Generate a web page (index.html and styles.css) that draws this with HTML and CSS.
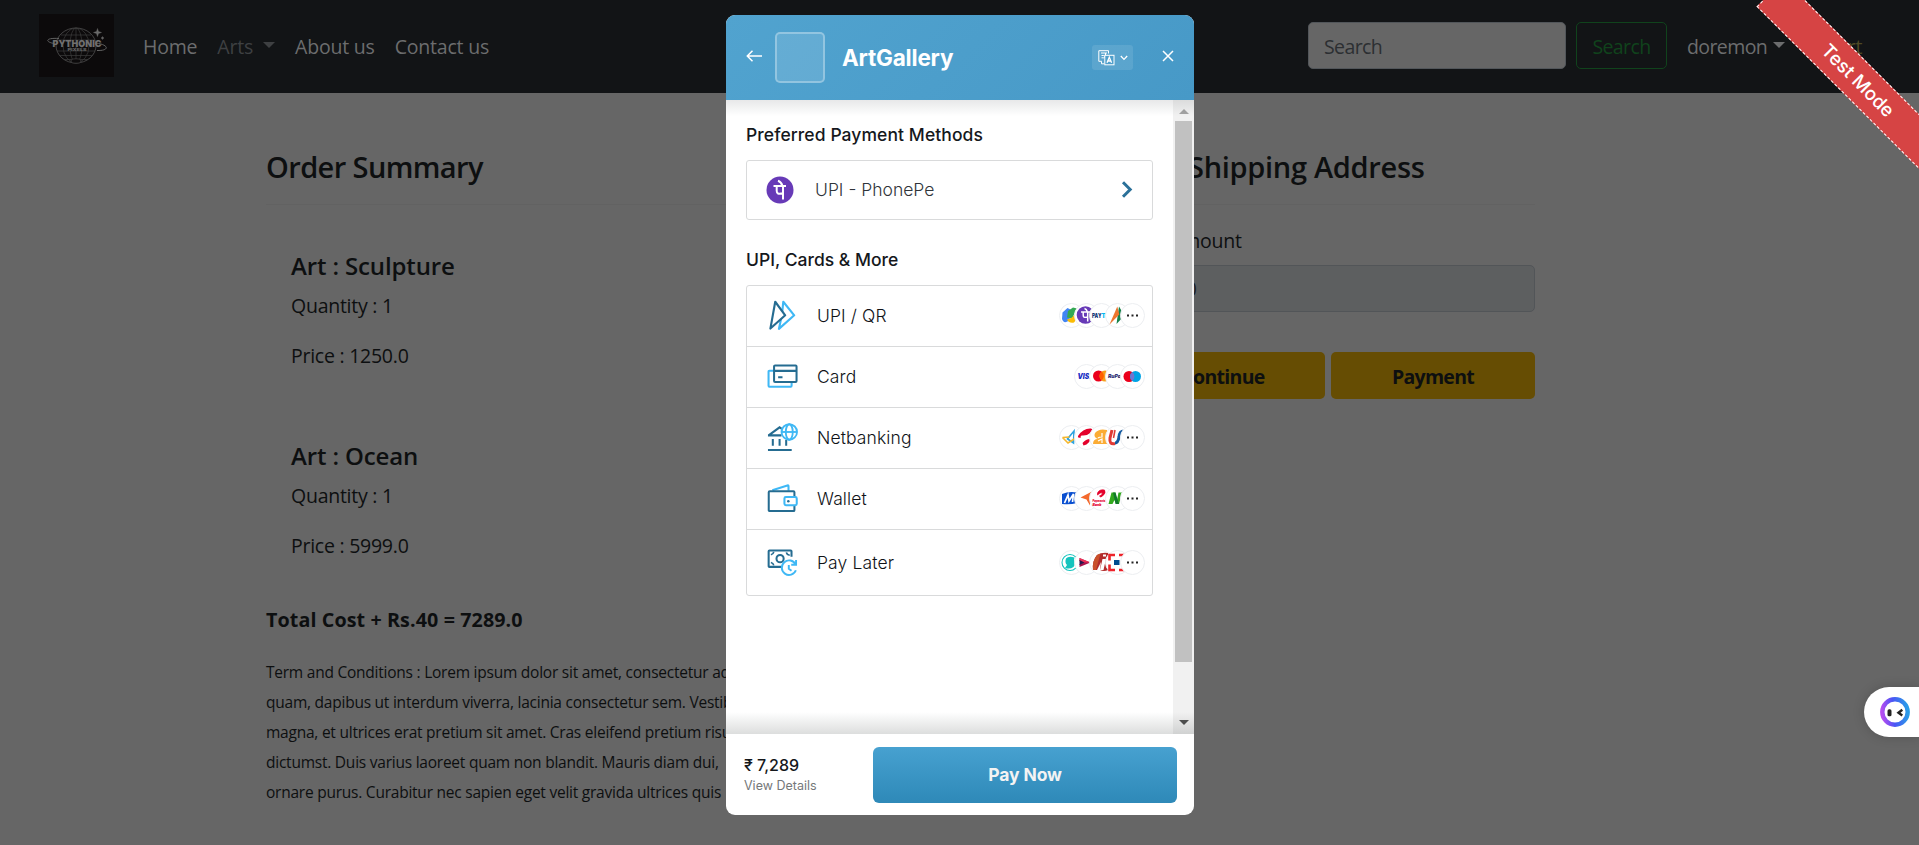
FILE: index.html
```html
<!DOCTYPE html>
<html lang="en">
<head>
<meta charset="utf-8">
<title>ArtGallery - Payment</title>
<link rel="stylesheet" href="styles.css">
</head>
<body>
<div class="page">
  <header class="navbar">
    <svg class="brand" viewBox="0 0 75 63">
      <rect width="75" height="63" fill="#0c0a0b"/>
      <g fill="none" stroke="#3c3c3c" stroke-width=".7">
        <ellipse cx="37" cy="31.500" rx="20" ry="17.500" stroke="#5a5a5a"/>
        <ellipse cx="37" cy="31.500" rx="6" ry="17.500"/>
        <ellipse cx="37" cy="31.500" rx="13" ry="17.500"/>
        <path d="M37 14v35M22 21h30M18.500 26h37M18 37h38M20 41.500h34M25 45.500h24"/>
      </g>
      <ellipse cx="37" cy="47" rx="5" ry="2.200" fill="#0c0a0b" stroke="#494949" stroke-width=".6"/>
      <path d="M20 24.500c-14-1-14 3.500-5 5M57 29c14 2 13 8 1 7.500" fill="none" stroke="#626262" stroke-width="1"/>
      <text x="13.500" y="33" textLength="49" lengthAdjust="spacingAndGlyphs" class="brand-name">PYTHONIC</text>
      <text x="28.500" y="36.800" textLength="19" lengthAdjust="spacingAndGlyphs" class="brand-sub">PIXELS</text>
      <path d="M58.500 14.500l1 3 3 1-3 1-1 3-1-3-3-1 3-1zM63.500 22.500l.5 1 1 .5-1 .5-.5 1-.5-1-1-.5 1-.5z" fill="#6a6a6a" stroke="#6a6a6a" stroke-width=".4"/>
    </svg>
    <nav class="links">
      <a>Home</a>
      <a class="muted">Arts<i class="caret"></i></a>
      <a>About us</a>
      <a>Contact us</a>
    </nav>
    <div class="search-box">Search</div>
    <div class="search-btn">Search</div>
    <div class="user">doremon<i class="caret"></i></div>
    <div class="cart">Cart</div>
  </header>
  <main class="main">
    <div class="titles">
      <h4>Order Summary</h4>
      <h4 class="ship">Shipping Address</h4>
    </div>
    <div class="columns">
      <section class="summary">
        <article class="item">
          <h5>Art : Sculpture</h5>
          <p>Quantity : 1</p>
          <p>Price : 1250.0</p>
        </article>
        <article class="item">
          <h5>Art : Ocean</h5>
          <p>Quantity : 1</p>
          <p>Price : 5999.0</p>
        </article>
        <div class="total">Total Cost + Rs.40 = 7289.0</div>
        <p class="terms">Term and Conditions : Lorem ipsum dolor sit amet, consectetur ad<br>quam, dapibus ut interdum viverra, lacinia consectetur sem. Vestib<br>magna, et ultrices erat pretium sit amet. Cras eleifend pretium risu<br>dictumst. Duis varius laoreet quam non blandit. Mauris diam dui,<br>ornare purus. Curabitur nec sapien eget velit gravida ultrices quis</p>
      </section>
      <section class="shipping">
        <label>Total Amount</label>
        <div class="field">7289.0</div>
        <div class="actions">
          <div class="btn">Continue</div>
          <div class="btn">Payment</div>
        </div>
      </section>
    </div>
  </main>
</div>

<div class="ribbon">Test Mode</div>

<div class="helper">
  <svg width="30" height="30" viewBox="0 0 30 30">
    <defs><linearGradient id="hg" x1="0" y1=".6" x2="1" y2=".5"><stop offset="0" stop-color="#b44df0"/><stop offset=".45" stop-color="#4a55f5"/><stop offset="1" stop-color="#2a9be8"/></linearGradient></defs>
    <circle cx="15" cy="15" r="12.700" fill="#fff" stroke="url(#hg)" stroke-width="4.400"/>
    <rect x="7.500" y="12.300" width="4" height="7" rx="1.600" fill="#222"/>
    <path d="M22.300 12.800l-3.800 3 3.800 2.600" fill="none" stroke="#222" stroke-width="2.400"/>
  </svg>
</div>

<div class="modal">
  <div class="modal-head">
    <svg class="back" width="17" height="12" viewBox="0 0 17 12"><path d="M16 6H1.500M6.500 .8L1.300 6l5.200 5.200" fill="none" stroke="#fff" stroke-width="1.500"/></svg>
    <div class="shop-logo"></div>
    <div class="shop-name">ArtGallery</div>
    <div class="lang">
      <svg width="17" height="16" viewBox="0 0 17 16" fill="none" stroke="#fff" stroke-width="1">
        <path d="M10.500 3.500V.7H.8v10.600h3M3 3h6M3.500 5.500h2.200c1.500 0 1.500 2.300 0 2.300H3.500M7.500 3v6M3.500 11.500v2.300h2.800"/>
        <rect x="6.800" y="5.300" width="9.200" height="9.500" fill="#4e9fcc"/>
        <path d="M9 12.800l2.300-5.600 2.300 5.600M9.700 11h3.300" stroke-width="1.300"/>
      </svg>
      <svg width="8" height="6" viewBox="0 0 8 6"><path d="M.8 1L4 4.400 7.200 1" fill="none" stroke="#fff" stroke-width="1.300"/></svg>
    </div>
    <svg class="close" width="12" height="12" viewBox="0 0 12 12"><path d="M1 1l10 10M11 1L1 11" stroke="#fff" stroke-width="1.500"/></svg>
  </div>

  <div class="modal-body">
    <div class="content">
      <h3>Preferred Payment Methods</h3>
      <div class="preferred">
        <svg width="28" height="28" viewBox="0 0 28 28"><circle cx="14" cy="14" r="13.500" fill="#673ab7"/><path d="M7.500 10h12.500M12 4.800q3 1 4.500 5M17 10V23.500M17 17.300c-5 1.200-6.300.2-6.300-2.500V10" fill="none" stroke="#fff" stroke-width="2"/></svg>
        <span>UPI - PhonePe</span>
        <svg width="12" height="17" viewBox="0 0 12 17"><path d="M2 1.300l7.200 7.200L2 15.700" fill="none" stroke="#2b7199" stroke-width="3"/></svg>
      </div>
      <h3 class="more">UPI, Cards &amp; More</h3>
      <ul class="methods">
        <li>
          <svg class="m-icon" viewBox="0 0 32 32" fill="none" stroke-width="2.200" stroke-linejoin="round"><path d="M16.800 1.800l11.300 14-15.800 14L15.500 15z" stroke="#3fb8f5"/><path d="M8.500 1.800l10.300 14L3.500 29.500z" stroke="#256c91" fill="#fff"/></svg>
          <span>UPI / QR</span>
          <div class="badges">
            <svg viewBox="0 0 25 25"><circle cx="12.500" cy="12.500" r="12"/><path d="M3.500 9.500l5-4.500 6 3-5 10q-5 3-6.500-2z" fill="#4285f4"/><path d="M9 8l5-3.500 4 1-5 10-5-1z" fill="#34a853"/><path d="M8 16.500l5-2 4.500-5 1.500 5-4 5q-5 1-7-3z" fill="#fbbc04"/><path d="M15 13l3-6 2 6z" fill="#ea4335"/></svg>
            <svg viewBox="0 0 25 25"><circle cx="12.500" cy="12.500" r="12"/><circle cx="11.500" cy="12" r="8.800" fill="#673ab7"/><path d="M7 9h9.500M10.500 5.500q2 .5 3 3.500M13.700 9v9.500M13.700 14c-4 1-4.500 0-4.500-2V9" fill="none" stroke="#fff" stroke-width="1.500"/></svg>
            <svg viewBox="0 0 25 25"><circle cx="12.500" cy="12.500" r="12"/><text x="3" y="15" textLength="9.500" lengthAdjust="spacingAndGlyphs" class="logo-text paytm" fill="#103778">PAY</text><text x="12.500" y="15" class="logo-text paytm" fill="#00baf2">TM</text></svg>
            <svg viewBox="0 0 25 25"><circle cx="12.500" cy="12.500" r="12"/><path d="M14 3.500l5.500 9-8 8.500z" fill="#148248"/><path d="M12.300 3.500l2 8-9.800 10z" fill="#ed752e"/></svg>
            <svg viewBox="0 0 25 25"><circle cx="12.500" cy="12.500" r="12"/><path d="M7 11.500h2v2H7zM11.500 11.500h2v2h-2zM16 11.500h2v2h-2z" fill="#222"/></svg>
          </div>
        </li>
        <li>
          <svg class="m-icon" viewBox="0 0 32 32" fill="none" stroke-width="2.100"><path d="M7 10H2.500q-.9 0-.9 1v14.500q0 1 .9 1h22q.9 0 .9-1V22" stroke="#3fb8f5"/><rect x="7.300" y="4.700" width="23.200" height="17" rx="1" stroke="#256c91"/><path d="M7.300 10.200h23.200M11.500 16.700h4.500" stroke="#256c91"/></svg>
          <span>Card</span>
          <div class="badges">
            <svg viewBox="0 0 25 25"><circle cx="12.500" cy="12.500" r="12"/><text x="3.500" y="15" textLength="17" lengthAdjust="spacingAndGlyphs" class="logo-text visa" fill="#1a2fc4">VISA</text></svg>
            <svg viewBox="0 0 25 25"><circle cx="12.500" cy="12.500" r="12"/><circle cx="9.500" cy="12" r="5.500" fill="#eb001b"/><circle cx="16" cy="12" r="5.500" fill="#f79e1b"/><path d="M12.700 7.600a5.500 5.500 0 0 1 0 8.800a5.500 5.500 0 0 1 0-8.800" fill="#ff5f00"/></svg>
            <svg viewBox="0 0 25 25"><circle cx="12.500" cy="12.500" r="12"/><text x="3" y="14.300" textLength="16" lengthAdjust="spacingAndGlyphs" class="logo-text rupay" fill="#282a72">RuPay</text></svg>
            <svg viewBox="0 0 25 25"><circle cx="12.500" cy="12.500" r="12"/><circle cx="9" cy="12.500" r="5.500" fill="#eb001b"/><circle cx="15.500" cy="12.500" r="5.500" fill="#00a2e5"/><path d="M12.250 8.100a5.500 5.500 0 0 1 0 8.800a5.500 5.500 0 0 1 0-8.800" fill="#7375cf"/></svg>
          </div>
        </li>
        <li>
          <svg class="m-icon" viewBox="0 0 32 32" fill="none" stroke-width="2.100"><g stroke="#256c91"><path d="M1 13.800h14M2 13.500l11-8 3 2M6 17.500v7M13 17.500v7M19.800 18.500v6M1 29h24.500"/></g><g stroke="#3fb8f5" stroke-width="1.900"><circle cx="23" cy="10.300" r="8" fill="#fff"/><ellipse cx="23" cy="10.300" rx="3.600" ry="8"/><path d="M15 10.300h16"/></g></svg>
          <span>Netbanking</span>
          <div class="badges">
            <svg viewBox="0 0 25 25"><circle cx="12.500" cy="12.500" r="12"/><path d="M8 14.500l7-8.500-.5 12-6.500-4.500" fill="none" stroke="#2aa3e0" stroke-width="1.600"/><path d="M3.500 12.500l7-.5M3.500 12.500l5.500 5.500 7-4.500" fill="none" stroke="#f5b72e" stroke-width="1.600"/></svg>
            <svg viewBox="0 0 25 25"><circle cx="12.500" cy="12.500" r="12"/><path d="M4 11q5-8 13-7.500 3 1 0 4-4 3.500-9 3-2 0-1 2-4 1-3-1.500zM8.500 18q4-4.500 8-4-1 4-4 5.500l-3 1z" fill="#e4002b"/></svg>
            <svg viewBox="0 0 25 25"><circle cx="12.500" cy="12.500" r="12"/><path d="M6 8q4-5 12-3v14H4q0-5 5-5-5-2-3-6z" fill="#fbac35"/><path d="M13 8v4q-3 0-4 1m0 3l4-2v4" stroke="#fff" fill="none" stroke-width="1.200"/></svg>
            <svg viewBox="0 0 25 25"><circle cx="12.500" cy="12.500" r="12"/><path d="M7 5L5 13q-1 7 5 5.500" fill="none" stroke="#e03a34" stroke-width="3"/><path d="M10 18q3 0 4-6 .500-6 5-6" fill="none" stroke="#1259a0" stroke-width="3"/><path d="M10 5L8.500 13" stroke="#e03a34" stroke-width="1.500"/></svg>
            <svg viewBox="0 0 25 25"><circle cx="12.500" cy="12.500" r="12"/><path d="M7 11.500h2v2H7zM11.500 11.500h2v2h-2zM16 11.500h2v2h-2z" fill="#222"/></svg>
          </div>
        </li>
        <li>
          <svg class="m-icon" viewBox="0 0 32 32" fill="none" stroke-width="2.100"><path d="M5.500 7.500L21 2.500q1.200-.3 1.200.8V8" stroke="#3fb8f5"/><rect x="1.800" y="8.500" width="26.500" height="20.500" rx="1" stroke="#256c91"/><rect x="18" y="14.500" width="12.700" height="8.500" rx="1.500" fill="#fff" stroke="#3fb8f5"/><circle cx="22" cy="18.800" r="1.300" fill="#256c91"/></svg>
          <span>Wallet</span>
          <div class="badges">
            <svg viewBox="0 0 25 25"><circle cx="12.500" cy="12.500" r="12"/><path d="M3 8q7-3 15-1.500v10.500q-7 2-15 1z" fill="#0a4fd0"/><path d="M5.500 17L9 9l1 6 4.500-7-1 8" fill="none" stroke="#fff" stroke-width="1.700"/></svg>
            <svg viewBox="0 0 25 25"><circle cx="12.500" cy="12.500" r="12"/><path d="M6.500 11.500L18 5.500l-2 5v9l-3.500-6z" fill="#f4692c"/></svg>
            <svg viewBox="0 0 25 25"><circle cx="12.500" cy="12.500" r="12"/><path d="M8.500 7q2-4 7-3 2 3-2 6-2 2-3 0 3-1 3-3-2-1-5 2z" fill="#e4002b" stroke="#e4002b" stroke-width=".7"/><text x="3.500" y="16" textLength="13" lengthAdjust="spacingAndGlyphs" class="logo-text bank" fill="#e4002b">Payments</text><text x="3.500" y="19.700" textLength="9" lengthAdjust="spacingAndGlyphs" class="logo-text bank" fill="#e4002b">Bank</text></svg>
            <svg viewBox="0 0 25 25"><circle cx="12.500" cy="12.500" r="12"/><path d="M3.500 18l3-11.500h4l1 11.500-2-4-2 4z" fill="#31a91d"/><path d="M12 14l1.500-7.500h3.500l-3 11.500h-3z" fill="#31a91d"/><path d="M8 6.500h2.500l3.500 11.500h-3.500z" fill="#107a29"/></svg>
            <svg viewBox="0 0 25 25"><circle cx="12.500" cy="12.500" r="12"/><path d="M7 11.500h2v2H7zM11.500 11.500h2v2h-2zM16 11.500h2v2h-2z" fill="#222"/></svg>
          </div>
        </li>
        <li class="last">
          <svg class="m-icon" viewBox="0 0 32 32" fill="none" stroke-width="2.100"><path d="M14.500 20.500H2.500q-.8 0-.8-.8V4.500q0-.8.8-.8h22q.8 0 .8.800V10" stroke="#256c91"/><circle cx="13.500" cy="12" r="3.700" stroke="#256c91"/><path d="M4 8q2.500-.5 3-3M4 16q2.500.5 3 3M20 5.500q.5 2.500 3.500 3" stroke="#256c91" stroke-width="1.700"/><g stroke="#3fb8f5" stroke-width="2"><path d="M29.500 18a7.500 7.500 0 1 0 .3 6M30 13.500v4.800h-5M22.500 18.500v4l2.800 2"/></g></svg>
          <span>Pay Later</span>
          <div class="badges">
            <svg viewBox="0 0 25 25"><circle cx="12.500" cy="12.500" r="12"/><circle cx="11" cy="12.500" r="8" fill="none" stroke="#14c3bd" stroke-width="1.100"/><path d="M15.500 7.500q-6-2-8.500 1-1.500 4 1 6.500l-2 3q5 1.500 8.500-1 3-4 .500-7z" fill="#14c3bd"/></svg>
            <svg viewBox="0 0 25 25"><circle cx="12.500" cy="12.500" r="12"/><path d="M5.500 8l11 4.500-11 4.500v-3l4-1.500-4-1.500z" fill="#a8124b"/><path d="M5.500 8l11 4.500H9.500l-4-1.500z" fill="#ee3157"/><path d="M5.500 10l5 2.500-5 2.500z" fill="#26184f"/></svg>
            <svg viewBox="0 0 25 25"><circle cx="12.500" cy="12.500" r="12"/><path d="M8 5q5-3 11-2v17q-4 2-8 0l1-8-4 8H4q-1-9 4-15z" fill="#b12b2b"/><path d="M13.500 9l-2.500 11h3.500l2.500-11zM14 4.500h3v2h-3z" fill="#fff"/><path d="M8 5l3.500-1.500L7 20H4q-1-9 4-15z" fill="#c8502b"/></svg>
            <svg viewBox="0 0 25 25"><circle cx="12.500" cy="12.500" r="12"/><path d="M10 5H4.500v5.500M4.500 14.500V20H10M14 5h5v5.500M19 14.500V20h-5" fill="none" stroke="#ed232a" stroke-width="2.600"/><rect x="9" y="10" width="5.500" height="5" fill="#004c8f"/></svg>
            <svg viewBox="0 0 25 25"><circle cx="12.500" cy="12.500" r="12"/><path d="M7 11.500h2v2H7zM11.500 11.500h2v2h-2zM16 11.500h2v2h-2z" fill="#222"/></svg>
          </div>
        </li>
      </ul>
    </div>
    <div class="scrollbar">
      <i class="up"></i>
      <div class="thumb"></div>
      <i class="down"></i>
    </div>
    <div class="shade top"></div>
    <div class="shade bottom"></div>
  </div>

  <div class="modal-foot">
    <div class="amount">
      <strong>₹ 7,289</strong>
      <span>View Details</span>
    </div>
    <div class="pay">Pay Now</div>
  </div>
</div>
</body>
</html>
```
FILE: styles.css
```css
* { box-sizing: border-box; }
body {
  margin: 0;
  height: 845px;
  overflow: hidden;
  position: relative;
  background: #666;
  font-family: "Open Sans", "Noto Sans", sans-serif;
}
h3, h4, h5, p, ul { margin: 0; padding: 0; }
svg { display: block; flex: none; }

.page { color: #0d0f10; }

/* Navigation bar */
.navbar {
  height: 93px;
  padding-left: 39px;
  display: flex;
  align-items: center;
  background: #121416;
  color: #6c6d6e;
  font-size: 19.500px;
  letter-spacing: -.2px;
}
.brand { width: 75px; height: 63px; margin-bottom: 2px; }
.brand-name { font: 900 9px Inter, sans-serif; fill: #707070; letter-spacing: 0; }
.brand-sub { font: 800 4px Inter, sans-serif; fill: #666; letter-spacing: 0; }
.links { display: flex; gap: 20px; margin-left: 29px; width: 1165px; }
.links .muted { color: #3e4042; }
.caret {
  display: inline-block;
  border: 6px solid transparent;
  border-top-color: currentColor;
  border-bottom: 0;
  vertical-align: 6px;
  margin-left: 10px;
}
.user .caret { margin-left: 6px; }
.search-box, .search-btn {
  height: 47px;
  line-height: 48px;
  border-radius: 5px;
  margin-bottom: 2px;
}
.search-box {
  width: 258px;
  padding-left: 15px;
  background: #666;
  border: 1px solid #52565a;
  color: #2c2f32;
  letter-spacing: -.6px;
}
.search-btn {
  width: 91px;
  margin-left: 10px;
  border: 1px solid #10431c;
  color: #10431c;
  text-align: center;
  letter-spacing: -.6px;
}
.user { margin-left: 20px; width: 138px; letter-spacing: -.6px; }
.cart { color: #4f4a24; }

/* Order page */
.main { width: 1269px; margin-left: 266px; padding-top: 56px; }
.titles {
  display: flex;
  height: 56px;
  border-bottom: 1px solid #626262;
}
.titles h4 {
  font-size: 29px;
  font-weight: 600;
  line-height: 36px;
  letter-spacing: -.6px;
  width: 922px;
}
.titles .ship { width: auto; letter-spacing: -.3px; }
.columns { display: flex; }
.summary { width: 855px; padding-top: 46px; }
.item { padding-left: 25px; height: 190px; }
.item h5 {
  font-size: 24px;
  font-weight: 600;
  line-height: 30px;
  letter-spacing: -.13px;
}
.item p {
  font-size: 19.500px;
  line-height: 30px;
  letter-spacing: -.25px;
  margin: 10px 0 20px;
}
.item p + p { margin-top: 0; }
.total {
  margin-top: -26px;
  font-size: 19.700px;
  font-weight: 700;
  line-height: 30px;
  letter-spacing: .1px;
}
.terms {
  margin-top: 22px;
  font-size: 15.500px;
  line-height: 30px;
  letter-spacing: -.235px;
  white-space: nowrap;
}
.shipping { width: 414px; padding-top: 20px; }
.shipping label {
  display: block;
  font-size: 19.500px;
  line-height: 32px;
  letter-spacing: -.2px;
}
.field {
  height: 47px;
  line-height: 45px;
  margin-top: 8px;
  padding-left: 15px;
  border: 1px solid #525558;
  border-radius: 5px;
  background: #5d5f60;
  color: #1d2022;
  font-size: 19.500px;
  letter-spacing: -.2px;
}
.actions { display: grid; grid-template-columns: 1fr 1fr; gap: 6px; margin-top: 40px; }
.btn {
  height: 47px;
  line-height: 49px;
  border-radius: 5px;
  background: #664d03;
  text-align: center;
  font-size: 19.500px;
  font-weight: 700;
  letter-spacing: -.7px;
}

/* Corner ribbon and floating helper */
.ribbon {
  position: absolute;
  left: 1734px;
  top: 61px;
  width: 248px;
  height: 39px;
  transform: rotate(45deg);
  background: #d64444;
  border: 1px dashed #fff;
  color: #fff;
  text-align: center;
  font: 500 18.700px/37px Inter, sans-serif;
}
.helper {
  position: absolute;
  right: 0;
  top: 687px;
  width: 55px;
  height: 50px;
  padding: 10px 0 0 16px;
  border-radius: 25px 0 0 25px;
  background: #fff;
  box-shadow: 0 0 12px rgba(0, 0, 0, .18);
}

/* Checkout window */
.modal {
  position: absolute;
  left: 726px;
  top: 15px;
  width: 468px;
  height: 800px;
  border-radius: 9px;
  overflow: hidden;
  display: flex;
  flex-direction: column;
  background: #fff;
  font-family: Inter, sans-serif;
}
.modal-head {
  height: 85px;
  padding: 0 20px;
  display: flex;
  align-items: center;
  background: linear-gradient(135deg, #51a3cf, #4799c7);
  color: #fff;
}
.back { margin-bottom: 4px; }
.shop-logo {
  width: 50px;
  height: 51px;
  margin-left: 12px;
  border: 2px solid rgba(255, 255, 255, .3);
  border-radius: 5px;
  background: rgba(255, 255, 255, .12);
}
.shop-name {
  width: 250px;
  margin-left: 17px;
  font-size: 22.500px;
  font-weight: 700;
  letter-spacing: -.2px;
}
.lang {
  width: 41px;
  height: 25px;
  display: flex;
  align-items: center;
  justify-content: center;
  gap: 5px;
  border-radius: 3px;
  background: rgba(255, 255, 255, .1);
}
.close { margin: 0 0 4px 29px; }

.modal-body { height: 634px; display: flex; position: relative; }
.content { width: 447px; padding: 22px 20px 0; }
.content h3 {
  font-size: 17.500px;
  font-weight: 500;
  line-height: 26px;
  color: #15181c;
  letter-spacing: .08px;
}
.preferred {
  height: 60px;
  margin-top: 12px;
  padding: 0 19px 1px;
  display: flex;
  align-items: center;
  border: 1px solid #d9dadb;
  border-radius: 3px;
  font-size: 17.500px;
  font-weight: 300;
  color: #30343a;
}
.preferred span { width: 328px; padding-left: 21px; }
.content .more { margin-top: 27px; letter-spacing: 0; }
.methods {
  margin-top: 12px;
  list-style: none;
  border: 1px solid #d9dadb;
  border-radius: 3px;
}
.methods li {
  height: 61px;
  padding: 0 7px 1px 20px;
  display: flex;
  align-items: center;
  border-bottom: 1px solid #d9dadb;
  font-size: 17.500px;
  font-weight: 300;
  color: #101318;
  letter-spacing: .12px;
}
.methods .last { height: 65px; border-bottom: 0; }
.m-icon { width: 31px; height: 31px; }
.methods span { flex: 1; padding-left: 19px; }
.badges { display: flex; }
.badges svg { width: 25px; height: 25px; margin-left: -9.700px; }
.badges circle:first-child { fill: #fff; stroke: #eceef1; }
.logo-text { font: italic 900 6.500px Inter, sans-serif; letter-spacing: 0; }
.paytm { font-size: 6px; font-style: normal; }
.visa { font-size: 7.500px; }
.rupay { font-size: 5px; }
.bank { font-size: 3.500px; }

.scrollbar {
  width: 21px;
  display: flex;
  flex-direction: column;
  align-items: center;
  background: #f1f1f1;
}
.scrollbar i { border: 5px solid transparent; }
.scrollbar .up { margin-top: 9px; border-top: 0; border-bottom-color: #a3a3a3; }
.thumb { width: 17px; height: 541px; margin-top: 7px; background: #c1c1c1; }
.scrollbar .down { margin-top: 58px; border-bottom: 0; border-top-color: #505050; }
.shade { position: absolute; left: 0; right: 0; }
.shade.top { top: 0; height: 16px; background: linear-gradient(rgba(23, 31, 37, .1), rgba(23, 31, 37, 0)); }
.shade.bottom { bottom: 0; height: 22px; background: linear-gradient(rgba(23, 31, 30, 0), rgba(23, 31, 30, .15)); }

.modal-foot {
  height: 81px;
  padding: 0 17px 0 18px;
  display: flex;
  align-items: center;
  justify-content: space-between;
}
.amount { display: flex; flex-direction: column; padding-top: 1px; }
.amount strong { font-size: 16px; font-weight: 500; line-height: 22px; color: #15181c; }
.amount span { font-size: 12.500px; line-height: 20px; color: #757779; }
.pay {
  width: 304px;
  height: 56px;
  line-height: 56px;
  border-radius: 6px;
  background: linear-gradient(#47a1d0, #2e89b8);
  color: #f3f3f3;
  text-align: center;
  font-size: 17.500px;
  font-weight: 700;
  letter-spacing: -.1px;
}
```
